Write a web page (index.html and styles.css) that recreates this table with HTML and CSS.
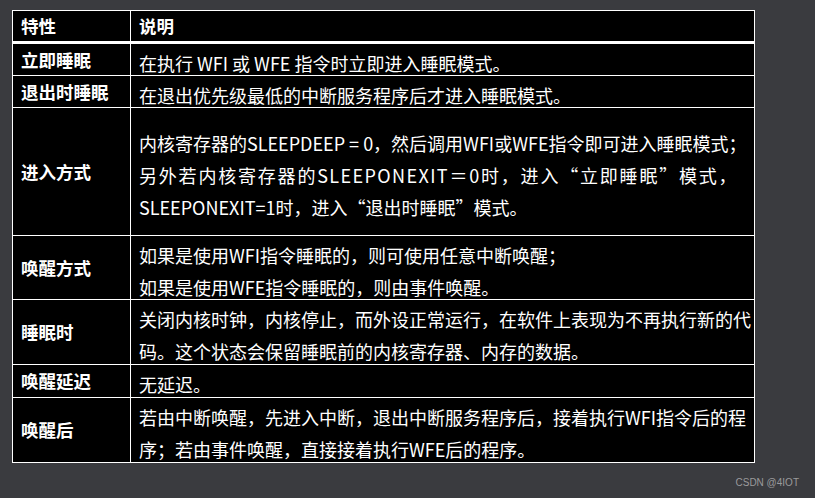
FILE: index.html
```html
<!DOCTYPE html>
<html lang="zh-CN">
<head>
    <meta charset="UTF-8">
    <title>睡眠模式</title>
    <link rel="stylesheet" href="styles.css">
</head>
<body>
    <table class="modes">
        <colgroup>
            <col class="key-col">
            <col>
        </colgroup>
        <thead>
            <tr>
                <th>特性</th>
                <th>说明</th>
            </tr>
        </thead>
        <tbody>
            <tr>
                <td class="key">立即睡眠</td>
                <td class="desc"><div class="text">在执行 WFI 或 WFE 指令时立即进入睡眠模式。</div></td>
            </tr>
            <tr>
                <td class="key">退出时睡眠</td>
                <td class="desc"><div class="text">在退出优先级最低的中断服务程序后才进入睡眠模式。</div></td>
            </tr>
            <tr>
                <td class="key">进入方式</td>
                <td class="desc tall">
                    <div class="text">
                        <div class="line full">内核寄存器的SLEEPDEEP = 0，然后调用WFI或WFE指令即可进入睡眠模式；</div>
                        <div class="line full spaced">另外若内核寄存器的SLEEPONEXIT＝0时，进入“立即睡眠”模式，</div>
                        <div class="line">SLEEPONEXIT=1时，进入“退出时睡眠”模式。</div>
                    </div>
                </td>
            </tr>
            <tr>
                <td class="key">唤醒方式</td>
                <td class="desc">
                    <div class="text">
                        <div class="line">如果是使用WFI指令睡眠的，则可使用任意中断唤醒；</div>
                        <div class="line">如果是使用WFE指令睡眠的，则由事件唤醒。</div>
                    </div>
                </td>
            </tr>
            <tr>
                <td class="key">睡眠时</td>
                <td class="desc loose">
                    <div class="text">
                        <div class="line full">关闭内核时钟，内核停止，而外设正常运行，在软件上表现为不再执行新的代</div>
                        <div class="line">码。这个状态会保留睡眠前的内核寄存器、内存的数据。</div>
                    </div>
                </td>
            </tr>
            <tr>
                <td class="key">唤醒延迟</td>
                <td class="desc loose"><div class="text">无延迟。</div></td>
            </tr>
            <tr>
                <td class="key">唤醒后</td>
                <td class="desc loose">
                    <div class="text">
                        <div class="line full">若由中断唤醒，先进入中断，退出中断服务程序后，接着执行WFI指令后的程</div>
                        <div class="line">序；若由事件唤醒，直接接着执行WFE后的程序。</div>
                    </div>
                </td>
            </tr>
        </tbody>
    </table>

    <span class="mark">CSDN @4IOT</span>
</body>
</html>
```

FILE: styles.css
```css
:root {
    --bg-page: #3a3b3f;
    --bg-table: #000000;
    --line: #ffffff;
    --text: #ffffff;
    --text-mark: #9a9a9c;
}

body {
    margin: 0;
    padding: 10px 12px;
    height: 498px;
    box-sizing: border-box;
    background: var(--bg-page);
    font-family: "Noto Sans CJK SC", "Noto Sans", sans-serif;
    position: relative;
}

.modes {
    border-collapse: collapse;
    table-layout: fixed;
    width: 743px;
    background: var(--bg-table);
    color: var(--text);
}

.key-col {
    width: 118px;
}

th,
td {
    border: 1px solid var(--line);
    padding: 0 8px;
}

th {
    text-align: left;
    font-size: 17.5px;
    font-weight: bold;
    line-height: 30px;
    height: 30px;
    border-bottom: 3px solid var(--line);
}

.key {
    font-size: 17.5px;
    font-weight: bold;
    line-height: 24px;
    vertical-align: middle;
}

.desc {
    font-size: 18px;
    line-height: 32px;
    padding-top: 3px;
    vertical-align: top;
}

/* text sits a bit low in each row */
.desc .text {
    margin-bottom: -4px;
}

.desc.loose {
    padding-bottom: 1px;
}

.desc.tall {
    padding-top: 19px;
    padding-bottom: 16px;
}

.desc.tall .text {
    padding-right: 8px;
}

.line {
    white-space: nowrap;
}

.line.full {
    text-align: justify;
    text-align-last: justify;
}

.line.spaced {
    letter-spacing: 1.4px;
}

.mark {
    position: absolute;
    right: 16px;
    bottom: 10px;
    font-family: "Liberation Sans", sans-serif;
    font-size: 10px;
    color: var(--text-mark);
}
```
